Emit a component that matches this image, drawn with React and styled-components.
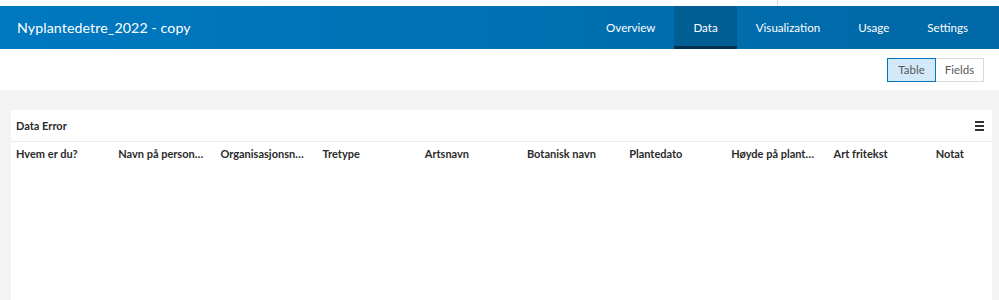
import React from 'react'
import styled, { createGlobalStyle } from 'styled-components'

const GlobalStyle = createGlobalStyle`
  body {
    margin: 0;
    font-family: Lato, "Noto Sans", sans-serif;
    background: #f3f3f3;
  }
`

const tabs = ['Overview', 'Data', 'Visualization', 'Usage', 'Settings']
const columns = [
  'Hvem er du?',
  'Navn på person…',
  'Organisasjonsn…',
  'Tretype',
  'Artsnavn',
  'Botanisk navn',
  'Plantedato',
  'Høyde på plant…',
  'Art fritekst',
  'Notat',
]

const App = () => {
  return (
    <Page>
      <GlobalStyle />
      <TopStrip>
        <StripEdge />
      </TopStrip>
      <Header>
        <Title>Nyplantedetre_2022 - copy</Title>
        <Nav>
          {tabs.map((t) => (
            <Tab key={t} $active={t === 'Data'}>{t}</Tab>
          ))}
        </Nav>
      </Header>
      <SubBar>
        <Toggle>
          <ToggleBtn $active>Table</ToggleBtn>
          <ToggleBtn>Fields</ToggleBtn>
        </Toggle>
      </SubBar>
      <Content>
        <Card>
          <CardHead>
            <CardTitle>Data Error</CardTitle>
            <Menu>
              <span />
              <span />
              <span />
            </Menu>
          </CardHead>
          <Columns>
            {columns.map((c) => (
              <Col key={c}>{c}</Col>
            ))}
          </Columns>
        </Card>
      </Content>
    </Page>
  )
}

const Page = styled.div`
  width: 999px;
  height: 300px;
  overflow: hidden;
  background: #f3f3f3;
  display: flex;
  flex-direction: column;
`

const TopStrip = styled.div`
  height: 6px;
  background: #fff;
  display: flex;
`

const StripEdge = styled.div`
  width: 777px;
  border-right: 1px solid #d6d6d6;
`

const Header = styled.header`
  height: 43px;
  background: linear-gradient(90deg, #0079c1 0%, #006fb0 60%, #0068a6 100%);
  display: flex;
  align-items: stretch;
  justify-content: space-between;
  padding: 0 12px 0 17px;
`

const Title = styled.h1`
  margin: 0;
  align-self: center;
  color: #fff;
  font-size: 14.2px;
  font-weight: 400;
  letter-spacing: 0.1px;
`

const Nav = styled.nav`
  display: flex;
  align-items: stretch;
`

const Tab = styled.div`
  display: flex;
  align-items: center;
  padding: 3px 19px 0 19px;
  color: #fff;
  font-size: 11.6px;
  background: ${(p) => (p.$active ? '#005e95' : 'transparent')};
  border-bottom: 3px solid ${(p) => (p.$active ? '#00304d' : 'transparent')};
`

const SubBar = styled.div`
  height: 41px;
  background: #fff;
  display: flex;
  align-items: center;
  justify-content: flex-end;
  padding-right: 15px;
`

const Toggle = styled.div`
  display: flex;
`

const ToggleBtn = styled.div`
  width: 49px;
  height: 24px;
  box-sizing: border-box;
  display: flex;
  align-items: center;
  justify-content: center;
  font-size: 11.5px;
  color: #595959;
  background: ${(p) => (p.$active ? '#d2e9f9' : '#fff')};
  border: 1px solid ${(p) => (p.$active ? '#0079c1' : '#d9d9d9')};
  margin-left: ${(p) => (p.$active ? '0' : '-1px')};
  position: relative;
  z-index: ${(p) => (p.$active ? 1 : 0)};
`

const Content = styled.main`
  flex: 1;
  padding: 20px 7px 0 11px;
  display: flex;
  min-width: 0;
`

const Card = styled.section`
  flex: 1;
  min-width: 0;
  overflow: hidden;
  background: #fff;
`

const CardHead = styled.div`
  height: 32px;
  box-sizing: border-box;
  border-bottom: 1px solid #ebebeb;
  display: flex;
  align-items: center;
  justify-content: space-between;
  padding: 0 8px 0 5px;
`

const CardTitle = styled.h2`
  margin: 0;
  font-size: 11px;
  font-weight: 700;
  color: #2b2b2b;
`

const Menu = styled.div`
  width: 9px;
  display: flex;
  flex-direction: column;
  gap: 2px;

  span {
    height: 2px;
    background: #333;
  }
`

const Columns = styled.div`
  display: grid;
  grid-template-columns: repeat(10, 102.2px);
  padding: 0 0 0 5px;
  height: 22px;
  align-items: center;
`

const Col = styled.div`
  font-size: 11px;
  font-weight: 700;
  color: #2b2b2b;
  white-space: nowrap;
`

export default App
